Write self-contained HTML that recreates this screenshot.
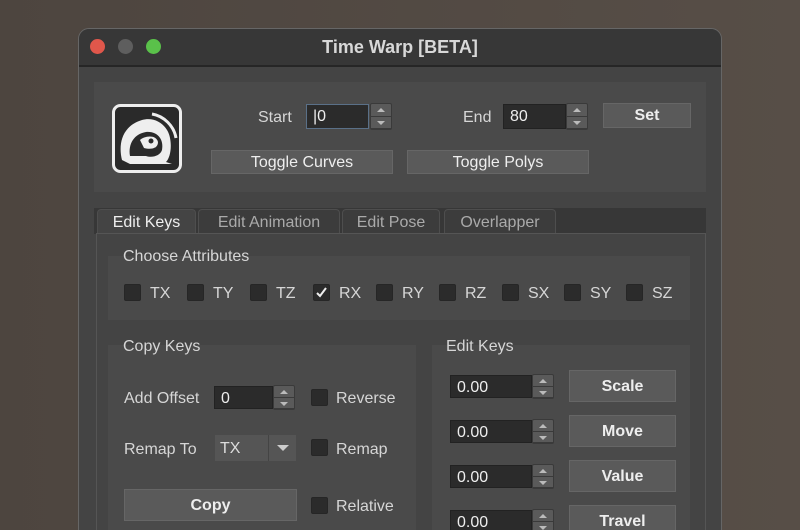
<!DOCTYPE html><html><head><style>
*{box-sizing:border-box;margin:0;padding:0}
html,body{width:800px;height:530px;overflow:hidden}
body{background:linear-gradient(90deg,#4d453f,#574e47);font-family:"Liberation Sans",sans-serif;position:relative;color:#dcdcdc}
.a{position:absolute}
.win{left:78px;top:28px;width:644px;height:510px;background:#444;border:1px solid #666;border-radius:11px 11px 0 0;overflow:hidden}
.title{left:0;top:0;width:100%;height:38px;background:#373737;border-bottom:2px solid #262626;text-align:center;line-height:36px;font-weight:bold;font-size:18px;color:#d8d8d8}
.dot{width:15px;height:15px;border-radius:50%;top:10px}
.lbl{font-size:16px;color:#d6d6d6;line-height:18px;white-space:nowrap}
.inp{background:#2b2b2b;border:1px solid #222;font-size:16px;color:#eee;padding-left:6px;line-height:23px}
.sp{width:22px;border-radius:2px;background:#5a5a5a;border:1px solid #3a3a3a}
.sp div{height:50%;border-bottom:1px solid #3a3a3a;position:relative}
.sp div:after{content:"";position:absolute;left:6px;top:4px;border-left:4px solid transparent;border-right:4px solid transparent}
.sp .u:after{border-bottom:4px solid #bbb}
.sp .d:after{border-top:4px solid #bbb}
.btn{background:#5a5a5a;border:1px solid #666;text-align:center;color:#eee;font-size:16px}
.cb{width:17px;height:17px;background:#2b2b2b;border:1px solid #262626;border-radius:2px}
.grp{background:#4a4a4a}
.tab{top:209px;height:24px;background:#3c3c3c;border:1px solid #4e4e4e;border-bottom:none;border-radius:4px 4px 0 0;text-align:center;font-size:16px;line-height:25px;color:#aaa}
</style></head><body>
<div class="a win">
<div class="a title">Time Warp [BETA]</div>
<div class="a dot" style="left:11px;background:#e0574b"></div>
<div class="a dot" style="left:39px;background:#5e5e5e"></div>
<div class="a dot" style="left:67px;background:#5ac14a"></div>
</div>
<div class="a grp" style="left:94px;top:82px;width:612px;height:110px"></div>
<svg class="a" style="left:112px;top:104px" width="70" height="69" viewBox="0 0 70 69">
<rect x="1.5" y="1.5" width="67" height="66" rx="7" fill="#2a2a2a" stroke="#eee" stroke-width="3"/>
<path d="M10 56 C6 40 10 22 30 16 C44 12 56 22 58 34 C60 44 58 54 54 58 L60 60 L18 60 Z" fill="#eee"/>
<path d="M18 52 C16 40 22 30 34 28 C46 27 52 36 50 46 C48 52 40 54 34 52 Z" fill="#2a2a2a"/>
<path d="M40 10 C52 12 62 22 64 34" stroke="#eee" stroke-width="3" fill="none"/>
<path d="M28 36 C32 32 44 30 46 38 C46 44 40 46 32 44 Z" fill="#eee"/>
<circle cx="39" cy="37" r="2.5" fill="#2a2a2a"/>
</svg>
<div class="a lbl" style="left:258px;top:109px">Start</div>
<div class="a inp" style="left:306px;top:104px;width:63px;height:25px;border:1px solid #5a7088">|0</div>
<div class="a sp" style="left:370px;top:103px;height:27px"><div class="u"></div><div class="d"></div></div>
<div class="a lbl" style="left:463px;top:109px">End</div>
<div class="a inp" style="left:503px;top:104px;width:63px;height:25px">80</div>
<div class="a sp" style="left:566px;top:103px;height:27px"><div class="u"></div><div class="d"></div></div>
<div class="a btn" style="left:603px;top:103px;width:88px;height:25px;line-height:24px;font-weight:bold">Set</div>
<div class="a btn" style="left:211px;top:150px;width:182px;height:24px;line-height:24px">Toggle Curves</div>
<div class="a btn" style="left:407px;top:150px;width:182px;height:24px;line-height:24px">Toggle Polys</div>
<div class="a" style="left:94px;top:208px;width:612px;height:26px;background:#373737"></div>
<div class="a" style="left:96px;top:233px;width:610px;height:300px;background:#444;border:1px solid #555;border-bottom:none"></div>
<div class="a tab" style="left:97px;width:99px;background:#444;color:#eee">Edit Keys</div>
<div class="a tab" style="left:198px;width:142px">Edit Animation</div>
<div class="a tab" style="left:342px;width:98px">Edit Pose</div>
<div class="a tab" style="left:444px;width:112px">Overlapper</div>
<div class="a grp" style="left:108px;top:256px;width:582px;height:64px"></div>
<div class="a lbl" style="left:123px;top:248px">Choose Attributes</div>
<div class="a cb" style="left:124px;top:284px"></div><div class="a lbl" style="left:150px;top:285px">TX</div>
<div class="a cb" style="left:187px;top:284px"></div><div class="a lbl" style="left:213px;top:285px">TY</div>
<div class="a cb" style="left:250px;top:284px"></div><div class="a lbl" style="left:276px;top:285px">TZ</div>
<div class="a cb" style="left:313px;top:284px"><svg width="15" height="15"><path d="M3 8 L6 11 L12 3" stroke="#eee" stroke-width="2" fill="none"/></svg></div><div class="a lbl" style="left:339px;top:285px">RX</div>
<div class="a cb" style="left:376px;top:284px"></div><div class="a lbl" style="left:402px;top:285px">RY</div>
<div class="a cb" style="left:439px;top:284px"></div><div class="a lbl" style="left:465px;top:285px">RZ</div>
<div class="a cb" style="left:502px;top:284px"></div><div class="a lbl" style="left:528px;top:285px">SX</div>
<div class="a cb" style="left:564px;top:284px"></div><div class="a lbl" style="left:590px;top:285px">SY</div>
<div class="a cb" style="left:626px;top:284px"></div><div class="a lbl" style="left:652px;top:285px">SZ</div>
<div class="a grp" style="left:108px;top:345px;width:308px;height:190px"></div>
<div class="a lbl" style="left:123px;top:338px">Copy Keys</div>
<div class="a lbl" style="left:124px;top:390px">Add Offset</div>
<div class="a inp" style="left:214px;top:386px;width:59px;height:23px">0</div>
<div class="a sp" style="left:273px;top:385px;height:25px"><div class="u"></div><div class="d"></div></div>
<div class="a cb" style="left:311px;top:389px"></div><div class="a lbl" style="left:336px;top:390px">Reverse</div>
<div class="a lbl" style="left:124px;top:441px">Remap To</div>
<div class="a" style="left:215px;top:435px;width:81px;height:26px;background:#555;font-size:16px;line-height:27px;padding-left:5px">TX</div>
<div class="a" style="left:268px;top:435px;width:1px;height:26px;background:#444"></div>
<div class="a" style="left:277px;top:445px;border-left:6px solid transparent;border-right:6px solid transparent;border-top:6px solid #ccc"></div>
<div class="a cb" style="left:311px;top:439px"></div><div class="a lbl" style="left:336px;top:441px">Remap</div>
<div class="a btn" style="left:124px;top:489px;width:173px;height:32px;line-height:31px;font-weight:bold">Copy</div>
<div class="a cb" style="left:311px;top:497px"></div><div class="a lbl" style="left:336px;top:498px">Relative</div>
<div class="a grp" style="left:432px;top:345px;width:258px;height:190px"></div>
<div class="a lbl" style="left:446px;top:338px">Edit Keys</div>
<div class="a inp" style="left:450px;top:375px;width:82px;height:23px">0.00</div>
<div class="a sp" style="left:532px;top:374px;height:25px"><div class="u"></div><div class="d"></div></div>
<div class="a btn" style="left:569px;top:370px;width:107px;height:32px;line-height:31px;font-weight:bold">Scale</div>
<div class="a inp" style="left:450px;top:420px;width:82px;height:23px">0.00</div>
<div class="a sp" style="left:532px;top:419px;height:25px"><div class="u"></div><div class="d"></div></div>
<div class="a btn" style="left:569px;top:415px;width:107px;height:32px;line-height:31px;font-weight:bold">Move</div>
<div class="a inp" style="left:450px;top:465px;width:82px;height:23px">0.00</div>
<div class="a sp" style="left:532px;top:464px;height:25px"><div class="u"></div><div class="d"></div></div>
<div class="a btn" style="left:569px;top:460px;width:107px;height:32px;line-height:31px;font-weight:bold">Value</div>
<div class="a inp" style="left:450px;top:510px;width:82px;height:23px">0.00</div>
<div class="a sp" style="left:532px;top:509px;height:25px"><div class="u"></div><div class="d"></div></div>
<div class="a btn" style="left:569px;top:505px;width:107px;height:32px;line-height:31px;font-weight:bold">Travel</div>
</body></html>
